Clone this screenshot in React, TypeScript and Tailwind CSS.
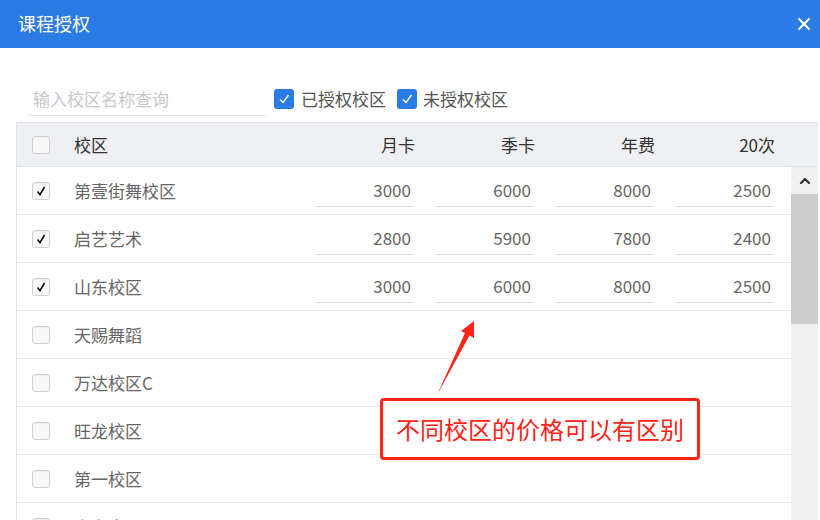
import { X, ChevronUp } from "lucide-react";

const font = { fontFamily: '"Noto Sans CJK SC", "Noto Sans", sans-serif' };

type Campus = { name: string; checked: boolean; prices?: number[] };

const campuses: Campus[] = [
  { name: "第壹街舞校区", checked: true, prices: [3000, 6000, 8000, 2500] },
  { name: "启艺艺术", checked: true, prices: [2800, 5900, 7800, 2400] },
  { name: "山东校区", checked: true, prices: [3000, 6000, 8000, 2500] },
  { name: "天赐舞蹈", checked: false },
  { name: "万达校区C", checked: false },
  { name: "旺龙校区", checked: false },
  { name: "第一校区", checked: false },
  { name: "山东大区", checked: false },
];

const columns = ["月卡", "季卡", "年费", "20次"];

function BlueCheck() {
  return (
    <span className="w-[20px] h-[20px] rounded-[3px] bg-[#2b7be4] flex items-center justify-center">
      <svg width="14" height="14" viewBox="0 0 14 14" fill="none">
        <path d="M3 7.5 L6 10.5 L11.5 3" stroke="white" strokeWidth="1.4" />
      </svg>
    </span>
  );
}

function RowCheck({ checked }: { checked: boolean }) {
  return (
    <span className="w-[18px] h-[18px] rounded-[3px] border border-[#cfcfd4] bg-[#f8f8f8] shadow-[inset_0_1px_1px_rgba(0,0,0,0.04)] flex items-center justify-center">
      {checked && (
        <svg width="12" height="12" viewBox="0 0 12 12" fill="none">
          <path d="M2.5 6.5 L5 9.5 L9.5 2" stroke="#111" strokeWidth="1.6" />
        </svg>
      )}
    </span>
  );
}

export default function App() {
  return (
    <div className="relative w-[820px] h-[520px] overflow-hidden bg-white" style={font}>
      {/* Header */}
      <div className="h-[48px] bg-[#2a7be3] flex items-center justify-between pl-[18px] pr-[6px]">
        <span className="text-[18px] text-white -mt-[2px]">课程授权</span>
        <X className="w-[20px] h-[20px] text-white" strokeWidth={2.6} />
      </div>

      {/* Toolbar */}
      <div className="flex items-center mt-[36px] h-[30px]">
        <div className="ml-[28px] w-[238px] h-[34px] border-b border-[#e2e2e8] flex items-center pl-[5px] text-[17px] text-[#c8c8cc]">
          输入校区名称查询
        </div>
        <label className="ml-[8px] flex items-center gap-[7px] text-[17px] text-[#555]">
          <BlueCheck />
          已授权校区
        </label>
        <label className="ml-[11px] flex items-center gap-[6px] text-[17px] text-[#555]">
          <BlueCheck />
          未授权校区
        </label>
      </div>

      {/* Table */}
      <div className="ml-[16px] mt-[8px] w-[802px] border-l border-t border-[#e2e3ea]">
        <div className="flex items-center h-[44px] bg-[#eff0f4] border-b border-[#e2e3ea]">
          <div className="w-[57px] pl-[15px] flex">
            <RowCheck checked={false} />
          </div>
          <div className="w-[222px] text-[17px] text-[#333]">校区</div>
          {columns.map((c) => (
            <div key={c} className="w-[120px] text-right pr-[1px] text-[17px] text-[#333]">
              {c}
            </div>
          ))}
        </div>

        <div className="flex">
          <div className="w-[774px]">
            {campuses.map((c) => (
              <div key={c.name} className="flex items-center h-[48px] border-b border-[#e6e6ee]">
                <div className="w-[57px] pl-[15px] flex">
                  <RowCheck checked={c.checked} />
                </div>
                <div className="w-[222px] text-[17px] text-[#666]">{c.name}</div>
                {c.prices &&
                  c.prices.map((p, i) => (
                    <div key={i} className="w-[120px] flex justify-end">
                      <div className="w-[98px] mr-[2px] h-[32px] border-b border-[#dcdde5] flex items-center justify-end pr-[3px] text-[17px] text-[#666]">
                        {p}
                      </div>
                    </div>
                  ))}
              </div>
            ))}
          </div>

          {/* Scrollbar */}
          <div className="w-[27px] bg-[#f0f0f0] flex flex-col">
            <div className="h-[27px] flex items-center justify-center">
              <ChevronUp className="w-[16px] h-[16px] text-[#333]" strokeWidth={3.5} />
            </div>
            <div className="h-[130px] bg-[#cdcdcd]" />
          </div>
        </div>
      </div>

      {/* Annotation */}
      <svg className="absolute left-0 top-0 pointer-events-none" width="820" height="520">
        <polygon points="437,395 465,333 461,331 474,321 474,338 469.5,335.5" fill="#ff2318" />
      </svg>
      <div className="absolute left-[380px] top-[398px] w-[320px] h-[62px] border-[3px] border-[#ff2318] rounded-[4px] bg-white flex items-center justify-center text-[24px] text-[#ff2318]">
        不同校区的价格可以有区别
      </div>
    </div>
  );
}
